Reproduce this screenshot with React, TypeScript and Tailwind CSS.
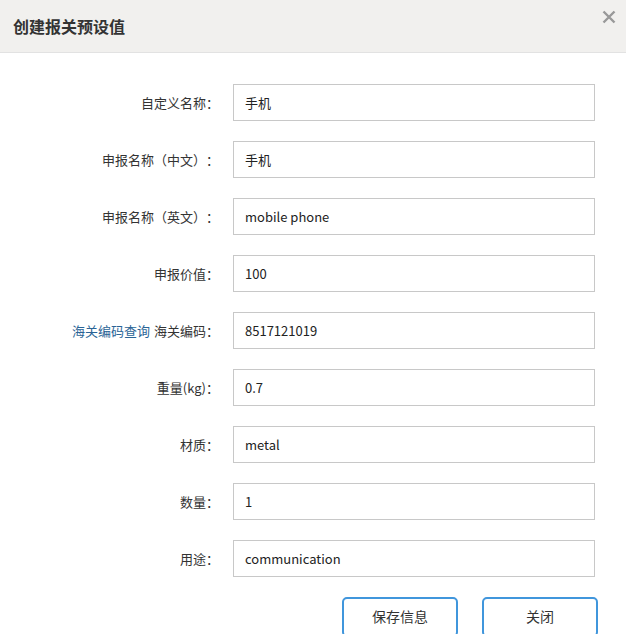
const FIELDS: { label: string; value: string; link?: string }[] = [
  { label: '自定义名称：', value: '手机' },
  { label: '申报名称（中文）：', value: '手机' },
  { label: '申报名称（英文）：', value: 'mobile phone' },
  { label: '申报价值：', value: '100' },
  { label: '海关编码：', value: '8517121019', link: '海关编码查询' },
  { label: '重量(kg)：', value: '0.7' },
  { label: '材质：', value: 'metal' },
  { label: '数量：', value: '1' },
  { label: '用途：', value: 'communication' },
];

export default function App() {
  return (
    <div
      className="h-[634px] w-[626px] overflow-hidden bg-white text-[13px] text-[#333] [text-spacing-trim:space-all]"
      style={{ fontFamily: '"Microsoft YaHei", "Noto Sans CJK SC", "Open Sans", sans-serif' }}
    >
      <header className="flex h-[53px] items-center justify-between border-b border-[#e2e2e2] bg-[#f1f0ee] pl-[13px] pr-[10px]">
        <h1 className="text-[16px] font-bold text-[#333]">创建报关预设值</h1>
        <button className="-mt-[18px] text-[#999]" aria-label="close">
          <svg width="14" height="14" viewBox="0 0 14 14" stroke="currentColor" strokeWidth="2.4">
            <path d="M1.5 1.5 L12.5 12.5 M12.5 1.5 L1.5 12.5" />
          </svg>
        </button>
      </header>

      <form className="flex flex-col gap-5 pt-[31px]">
        {FIELDS.map((f) => (
          <div key={f.label} className="flex items-center">
            <label className="w-[220px] pr-[1px] text-right">
              {f.link && <a className="mr-1 text-[#2a6496]">{f.link}</a>}
              {f.label}
            </label>
            <input
              defaultValue={f.value}
              className="ml-[13px] h-[37px] w-[362px] border border-[#c8c8c8] px-[11px] text-[13px] text-[#222] outline-none"
            />
          </div>
        ))}
      </form>

      <div className="mt-[20px] flex gap-[24px] pl-[342px]">
        <button className="h-[40px] w-[116px] rounded-[5px] border-2 border-[#4096dc] bg-white pb-[2px] text-[14px] text-[#333]">
          保存信息
        </button>
        <button className="h-[40px] w-[116px] rounded-[5px] border-2 border-[#4096dc] bg-white pb-[2px] text-[14px] text-[#333]">
          关闭
        </button>
      </div>
    </div>
  );
}
